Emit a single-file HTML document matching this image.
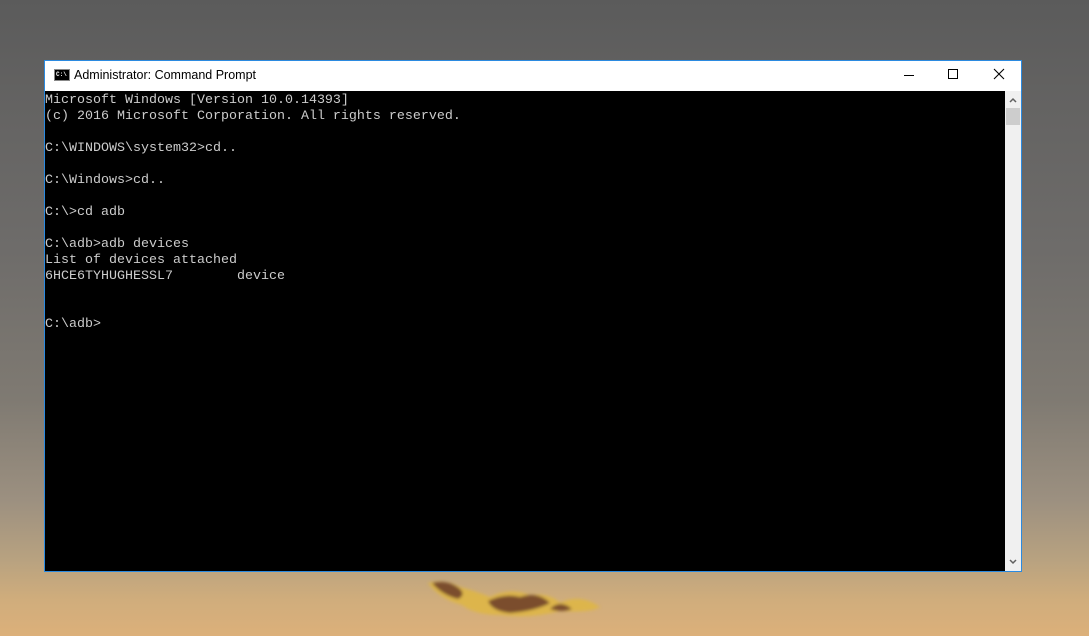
<!DOCTYPE html>
<html><head><meta charset="utf-8"><style>
html,body{margin:0;padding:0;width:1089px;height:636px;overflow:hidden}
body{position:relative;background:linear-gradient(to bottom,#5b5b5b 0px,#656463 120px,#6e6c6a 250px,#7f7a72 400px,#9c9080 500px,#b8a280 560px,#d0ad7c 600px,#dcb07a 636px)}
.win{position:absolute;left:44px;top:60px;width:976px;height:510px;border:1px solid #2b8ae0;background:#fff}
.title{position:absolute;left:0;top:0;width:976px;height:30px;background:#fff;font-family:"Liberation Sans",sans-serif;font-size:12.5px;color:#000}
.title .t{position:absolute;left:29px;top:7px}
.icon{position:absolute;left:9px;top:8px;width:14px;height:10px;background:#000;border:1px solid #888;font:bold 6px "Liberation Mono",monospace;color:#fff;line-height:10px;text-indent:1px}
.con{position:absolute;left:0;top:30px;width:960px;height:478px;padding-top:2px;background:#000;color:#cccccc;font-family:"Liberation Mono",monospace;font-size:13.33px;line-height:16px;white-space:pre}
.sb{position:absolute;left:960px;top:30px;width:16px;height:480px;background:#f0f0f0}
.thumb{position:absolute;left:1px;top:17px;width:14px;height:17px;background:#cdcdcd}
</style></head><body>
<div class="win">
 <div class="title"><div class="icon">C:\</div><span class="t">Administrator: Command Prompt</span>
  <svg style="position:absolute;left:850px;top:6px" width="126" height="20">
   <line x1="9" y1="8.5" x2="19" y2="8.5" stroke="#000" stroke-width="1"/>
   <rect x="53.5" y="2.5" width="9" height="9" fill="none" stroke="#000"/>
   <path d="M99 2 L109 12 M109 2 L99 12" stroke="#000" stroke-width="1.1"/>
  </svg>
 </div>
 <div class="con">Microsoft Windows [Version 10.0.14393]
(c) 2016 Microsoft Corporation. All rights reserved.

C:\WINDOWS\system32>cd..

C:\Windows>cd..

C:\>cd adb

C:\adb>adb devices
List of devices attached
6HCE6TYHUGHESSL7        device


C:\adb></div>
 <div class="sb"><div class="thumb"></div>
  <svg style="position:absolute;left:0;top:0" width="16" height="480">
   <path d="M5 11 L8 8 L11 11" fill="none" stroke="#606060" stroke-width="1.5"/>
   <path d="M5 469 L8 472 L11 469" fill="none" stroke="#606060" stroke-width="1.5"/>
  </svg>
 </div>
</div>
<svg style="position:absolute;left:400px;top:575px" width="220" height="50">
 <defs><filter id="b"><feGaussianBlur stdDeviation="1.5"/></filter></defs>
 <g filter="url(#b)">
 <path d="M28 8 Q45 4 60 12 Q75 16 90 22 Q110 12 130 20 Q150 18 160 28 Q180 18 200 32 Q190 38 160 36 Q130 44 100 40 Q75 40 62 30 Q40 24 28 8Z" fill="#e0b840" opacity="0.8"/>
 <path d="M32 8 Q48 4 60 14 Q66 20 58 24 Q42 20 32 8Z M88 26 Q105 18 120 22 Q138 16 150 28 Q135 36 110 38 Q92 36 88 26Z M150 34 Q160 24 172 34 Q162 38 150 34Z" fill="#6a3a28" opacity="0.85"/>
 </g>
</svg>
</body></html>
